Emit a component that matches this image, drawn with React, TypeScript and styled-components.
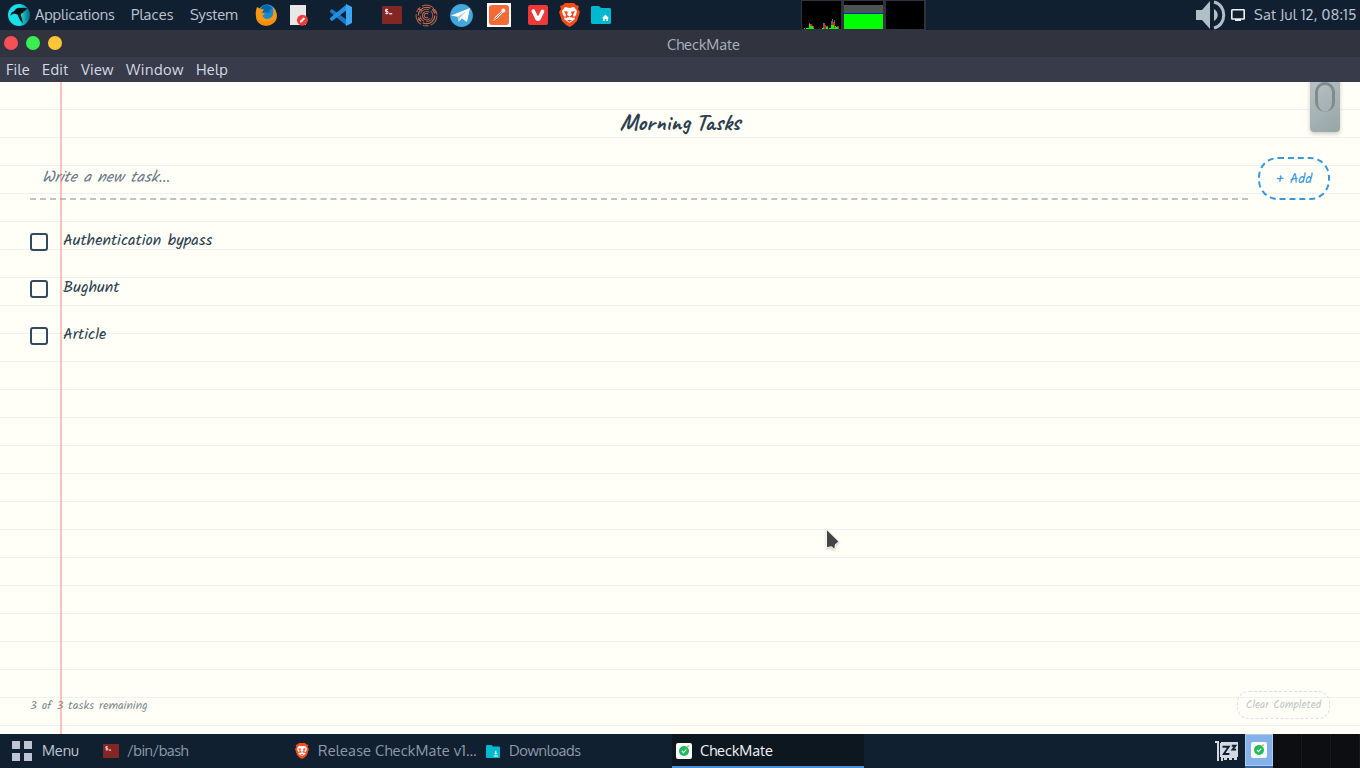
import React from "react";
import styled, { createGlobalStyle } from "styled-components";

const Global = createGlobalStyle`
  *, *::before, *::after { box-sizing: border-box; }
  html, body { margin: 0; padding: 0; overflow: hidden; }
  body { font-family: "Oxygen", "Oxygen-Sans", "Noto Sans", sans-serif; }
  svg { display: block; }
`;

const Desktop = styled.div`
  position: relative;
  width: 1360px;
  height: 768px;
  display: flex;
  flex-direction: column;
  overflow: hidden;
`;

const TopPanel = styled.header`
  height: 30px;
  flex: none;
  display: flex;
  align-items: center;
  background: #112031;
`;

const Slot = styled.span<{ $w: number; $gap?: number }>`
  flex: none;
  display: flex;
  align-items: center;
  width: ${(p) => p.$w}px;
  margin-left: ${(p) => p.$gap ?? 0}px;
`;

const PanelText = styled.span<{ $w: number; $gap?: number; $color?: string; $track?: number }>`
  flex: none;
  width: ${(p) => p.$w}px;
  margin-left: ${(p) => p.$gap ?? 0}px;
  padding-bottom: 2px;
  color: ${(p) => p.$color ?? "#bcc3d2"};
  font-size: 14.6px;
  line-height: 20px;
  letter-spacing: ${(p) => p.$track ?? 0}px;
  white-space: nowrap;
`;

const Spacer = styled.div`
  flex: 1;
`;

const Graphs = styled.div`
  display: flex;
  margin-left: 190px;
`;

const Graph = styled.div`
  width: 42px;
  height: 30px;
  padding: 1px 2px 1px 1px;
  background: #30323f;
  &:last-child {
    width: 41px;
  }
`;

const TitleBar = styled.div`
  height: 27px;
  flex: none;
  display: grid;
  grid-template-columns: 1fr auto 1fr;
  background: #31343f;
`;

const Lights = styled.div`
  display: flex;
  gap: 8px;
  padding: 6px 0 0 4px;
`;

const Light = styled.span<{ $color: string }>`
  width: 14px;
  height: 14px;
  border-radius: 50%;
  background: ${(p) => p.$color};
`;

const WindowTitle = styled.span`
  padding-top: 5px;
  margin-left: 47px;
  width: 73px;
  font-size: 14.6px;
  line-height: 19px;
  color: #a9b0be;
  white-space: nowrap;
`;

const TitleWrap = styled.div`
  display: flex;
  width: 120px;
  justify-content: center;
`;

const MenuBar = styled.nav`
  height: 25px;
  flex: none;
  display: flex;
  align-items: center;
  padding-left: 6px;
  background: #383b4a;
`;

const Paper = styled.main`
  position: relative;
  flex: 1;
  display: flex;
  flex-direction: column;
  padding: 0 30px;
  overflow: hidden;
  background: repeating-linear-gradient(transparent 0 27px, #eef0f1 27px 28px), #fffff8;
  font-family: "Kalam", "Lato", sans-serif;
`;

const MarginLine = styled.div`
  position: absolute;
  top: 0;
  bottom: 0;
  left: 60px;
  width: 2px;
  background: rgba(255, 107, 107, 0.42);
`;

const Clip = styled.div`
  position: absolute;
  top: -8px;
  right: 20px;
  width: 30px;
  height: 58px;
  border-radius: 4px;
  background: linear-gradient(145deg, #bdc3c7, #95a5a6);
  box-shadow: 0 2px 4px rgba(0, 0, 0, 0.2);
  &::after {
    content: "";
    position: absolute;
    top: 8px;
    left: 5px;
    width: 20px;
    height: 30px;
    border: 3px solid #7f8c8d;
    border-bottom: 0;
    border-radius: 10px;
  }
`;

const ListTitle = styled.h1`
  margin: 25px 0 0;
  height: 30px;
  text-align: center;
  font-family: "Caveat", "Kalam", sans-serif;
  font-size: 24px;
  line-height: 30px;
  font-weight: 700;
  color: #2c3e50;
`;

const EntryRow = styled.div`
  display: flex;
  gap: 10px;
  height: 43px;
  margin-top: 20px;
`;

const Entry = styled.div`
  flex: 1;
  height: 43px;
  padding: 9px 12px;
  font-size: 16px;
  font-style: italic;
  line-height: 23px;
  color: #6c7a89;
  border-bottom: 2px dashed #bdc3c7;
`;

const AddButton = styled.button`
  width: 72px;
  height: 43px;
  padding: 0;
  border: 2px dashed #3498db;
  border-radius: 20px;
  background: transparent;
  font: 14px/38px "Kalam", "Lato", sans-serif;
  color: #3498db;
`;

const Tasks = styled.ul`
  list-style: none;
  margin: 18px 0 0;
  padding: 0;
`;

const Task = styled.li`
  display: flex;
  height: 47px;
  padding-top: 11px;
  gap: 15px;
`;

const Check = styled.span`
  width: 18px;
  height: 18px;
  margin-top: 4px;
  border: 2px solid #34495e;
  border-radius: 3px;
`;

const TaskText = styled.span`
  padding-top: 1px;
  font-size: 16px;
  line-height: 22px;
  color: #2c3e50;
  white-space: nowrap;
`;

const Footer = styled.footer`
  display: flex;
  align-items: center;
  justify-content: space-between;
  height: 28px;
  margin-top: auto;
  margin-bottom: 15px;
  color: #7f8c8d;
`;

const Count = styled.span`
  font-size: 12px;
`;

const ClearButton = styled.button`
  width: 93px;
  height: 28px;
  padding: 0;
  border: 1px dashed #dcdfe0;
  border-radius: 12px;
  background: transparent;
  font: 11px/25px "Kalam", "Lato", sans-serif;
  color: #c1c8c8;
  white-space: nowrap;
`;

const Pointer = styled.svg`
  position: absolute;
  left: 824px;
  top: 528px;
`;

const BottomPanel = styled.footer`
  height: 34px;
  flex: none;
  display: flex;
  align-items: center;
  background: #112031;
`;

const ActiveTask = styled.div`
  display: flex;
  align-items: center;
  align-self: stretch;
  width: 192px;
  margin-left: 91px;
  padding-left: 4px;
  padding-top: 1px;
  background: #0d1720;
  border-bottom: 2px solid #4a90d9;
`;

const Workspace = styled.div<{ $current?: boolean }>`
  display: flex;
  align-items: center;
  justify-content: center;
  width: ${(p) => (p.$current ? 28 : 29)}px;
  height: ${(p) => (p.$current ? 32 : 34)}px;
  align-self: flex-start;
  border: ${(p) => (p.$current ? "1px solid #b0ccf5" : "0 solid")};
  border-right: ${(p) => (p.$current ? "1px solid #b0ccf5" : "1px solid #17191c")};
  background: ${(p) => (p.$current ? "#85b1eb" : "#0d0e12")};
`;

const Switcher = styled.div`
  display: flex;
  height: 34px;
  width: 115px;
  margin-left: 7px;
  background: linear-gradient(90deg, #39679d 28px, #0d0e12 28px);
`;

const Parrot = () => (
  <svg width="22" height="22" viewBox="0 0 22 22">
    <defs>
      <linearGradient id="shade" x1="0" x2="1">
        <stop offset=".55" stopColor="#18e0ea" />
        <stop offset="1" stopColor="#0b6674" />
      </linearGradient>
    </defs>
    <circle cx="11" cy="11" r="11" fill="url(#shade)" />
    <path d="M2.2 11.4 3.6 8.6 6.4 7 8 4.8l2.6-1 6.4.2 3 .8-3 1.2 1 .5-3 1.2.6.8-2.2.8-.6 1.6 2.4 8.6-3.2-3.6-2.6-5.3L6 9.6z" fill="#071014" />
  </svg>
);

const Firefox = () => (
  <svg width="23" height="22" viewBox="0 0 23 22">
    <circle cx="12" cy="9.5" r="9.3" fill="#168acb" />
    <path d="M8 2c4-2 8 0 9 3l-3 1 1 3-5-1-3 1-2-3z" fill="#0b66a8" />
    <path d="M2 3c1 1 3 1 4 2l3 .5-2 3 3 1.5-2.5 1.5C8.500 15.500 14.500 16.500 17.500 12l1-5-1-4c4 3 6 9 3 14-5 7-16 6-19-2C0 9 1 6 2 3z" fill="#fa9815" />
    <path d="M1 12c3 6 13 8 20 2-3 7-12 10-17 5-2-2-3-4-3-7z" fill="#f18d0b" />
  </svg>
);

const DocIcon = () => (
  <svg width="19" height="22" viewBox="0 0 19 22">
    <path d="M0 1h16v20H0z" fill="#e8e8e9" />
    <circle cx="12.4" cy="16.2" r="5.5" fill="#f23c3a" />
    <path d="m9.800 18.800.5-2 3.500-3.500 1.400 1.400-3.500 3.500z" fill="#fff" />
  </svg>
);

const Code = () => (
  <svg width="22" height="22" viewBox="0 0 22 22">
    <path d="m0 6.500 2-1.500L17 16v6L0 8z" fill="#1976c8" />
    <path d="m0 15.500 2 1.500L17 6V0L0 14z" fill="#238fdf" />
    <path d="m16 0 6 3v16l-6 3z" fill="#3ba8f4" />
  </svg>
);

const Terminal = ({ w, h }: { w: number; h: number }) => (
  <svg width={w} height={h} viewBox="0 0 20 18" preserveAspectRatio="none">
    <rect width="20" height="18" rx="1" fill="#832724" />
    <path d="M6 3.500H3.500v2H6v2H3.300M4.700 2.700v5.600" fill="none" stroke="#f5dddd" strokeWidth="1" />
    <path d="M7.200 7.800h3" stroke="#fff" strokeWidth="1.200" />
  </svg>
);

const Burp = () => (
  <svg width="23" height="23" viewBox="0 0 23 23" fill="none" strokeWidth="1.100">
    <circle cx="11.500" cy="11.500" r="10.400" stroke="#b0573f" strokeDasharray="12 2 6 2" />
    <circle cx="11.500" cy="11.500" r="8.300" stroke="#c47a5a" strokeDasharray="17 2 5 2" />
    <circle cx="11.500" cy="11.500" r="6.200" stroke="#b9503f" strokeDasharray="10 2 7 2" />
    <path d="M14.300 8.400A4.200 4.200 0 1 0 14.600 14.600M13 10a2.200 2.200 0 1 0 0 3M3 4.500l4 2M18 4l3 5M3 16l3-2" stroke="#c56a4f" />
  </svg>
);

const Telegram = () => (
  <svg width="23" height="23" viewBox="0 0 23 23">
    <circle cx="11.5" cy="11.5" r="11.4" fill="#42a7dc" />
    <path d="M1 11.5 20 4l-3 14-5.2-3.5-3 3.2-1.2-5z" fill="#fff" />
    <path d="m7.6 12.7 9-6-6.5 7-1.3 4z" fill="#b9cbd7" />
  </svg>
);

const Postman = () => (
  <svg width="24" height="24" viewBox="0 0 24 24">
    <path d="M0 0h24v24H0z" fill="#fff" />
    <rect x="2" y="2" width="20" height="20" rx="3" fill="#f36a35" />
    <path d="m6 18 2.500-4.500 6-5.500 1.600 1.600-5.600 5.600z" fill="#fff" />
    <circle cx="16.400" cy="7.400" r="2" fill="#fff" />
    <path d="m7.200 16.700 8-8" stroke="#9c5540" strokeWidth=".8" />
  </svg>
);

const Vivaldi = () => (
  <svg width="20" height="20" viewBox="0 0 20 20">
    <rect width="20" height="20" rx="2" fill="#ef3939" />
    <path d="M5.300 6 9 13.600q1 1.200 2 0L14.500 6.400" fill="none" stroke="#fff" strokeWidth="3.600" strokeLinecap="round" strokeLinejoin="round" />
  </svg>
);

const Brave = ({ w, h }: { w: number; h: number }) => (
  <svg width={w} height={h} viewBox="0 0 21 24">
    <path d="m6 0-2 2-3 1 1 3-2 3 3 9 4 4 3.5 2 3.5-2 4-4 3-9-2-3 1-3-3-1-2-2z" fill="#fb4b17" />
    <path d="m6 4 4.5 1L15 4l3 4-1 4-2 2 1 2-5.5 4L5 16l1-2-2-2-1-4z" fill="#fff" />
    <path d="m5 8 4 .8-1 3 2.5 2 2.5-2-1-3 4-.8-2 4 1 3-4.5-1-4.5 1 1-3zM8 17h5l-2.5 2z" fill="#ed4820" />
  </svg>
);

const Folder = ({ w, h, down }: { w: number; h: number; down?: boolean }) => (
  <svg width={w} height={h} viewBox="0 0 20 18" preserveAspectRatio="none">
    <path d="M1 0h7l2 2h9l1 1v14l-1 1H1l-1-1V1z" fill="#00b9d0" />
    {down ? (
      <path d="M13.300 8h1.400v3h1.700L14 13.400 11.600 11h1.700zM11 14.500h6V16h-6z" fill="#fff" />
    ) : (
      <path d="m14.400 8.500 3.600 3.700h-1V15h-1.700v-2h-1.600v2H12v-2.800h-1z" fill="#fff" />
    )}
  </svg>
);

const Volume = () => (
  <svg width="30" height="30" viewBox="0 0 30 30">
    <path d="M0 10h6l8-9v28l-8-9H0z" fill="#b1bec5" />
    <path d="M18 9c5 3 5 9 0 12z" fill="#b1bec5" />
    <path d="M18 2c13 3 13 23 0 26" fill="none" stroke="#b1bec5" strokeWidth="3" />
  </svg>
);

const Monitor = () => (
  <svg width="14" height="12" viewBox="0 0 14 12">
    <rect x=".8" y=".8" width="12.4" height="9.2" rx=".6" fill="none" stroke="#eef1f3" strokeWidth="1.6" />
    <path d="M4 10h6v2H4z" fill="#eef1f3" />
  </svg>
);

const CpuGraph = () => (
  <svg width="39" height="28" viewBox="0 0 39 28">
    <path d="M0 0h39v28H0z" />
    <path d="M21 28v-6h2v6zm3 0v-3h2v3zm5 0v-8h1v-2h1v3h1v-2h1v9zm6 0v-3h2v3z" fill="#666" />
    <path d="M7 27v-5h1v1h2v2h2v3zM22 28v-4h2v4zm7 0v-5h1v-1h3v5h3v-2h1v3z" fill="#e0221c" />
    <path d="M2 28v-1h1v1zm2 0v-1h3v-4h1v2h3v2h1v1zm16 0v-1h2v1zm4 0v-2h2v2zm3 0v-1h2v-3h3v3h1v-2h1v3zm7 0v-2h2v2z" fill="#0f0" />
  </svg>
);

const MemGraph = () => (
  <svg width="39" height="28" viewBox="0 0 39 28">
    <path d="M0 0h39v28H0z" />
    <path d="M0 4h39v8H0z" fill="#4b544d" />
    <path d="M0 12h39v1H0z" fill="#0628c8" />
    <path d="M0 13h39v15H0z" fill="#0f0" />
  </svg>
);

const NetGraph = () => (
  <svg width="38" height="28" viewBox="0 0 38 28">
    <path d="M0 0h38v28H0z" />
  </svg>
);

const CheckApp = () => (
  <svg width="16" height="16" viewBox="0 0 16 16">
    <rect width="16" height="16" rx="2" fill="#f7fafa" />
    <circle cx="8" cy="8" r="5" fill="#20bc5b" />
    <path d="m5.900 8 1.600 1.600 2.700-2.900" fill="none" stroke="#fff" strokeWidth="1.100" />
    <path d="m11.200 4 1.600-1.400" stroke="#f5a449" strokeWidth="1.400" />
  </svg>
);

const Grid = () => (
  <svg width="20" height="20" viewBox="0 0 20 20">
    <path d="M0 0h8v8H0zM12 0h8v8h-8zM0 12h8v8H0zM12 12h8v8h-8z" fill="#bec4d3" />
  </svg>
);

const Sleeper = () => (
  <svg width="23" height="20" viewBox="0 0 23 20">
    <path d="M0 0h4v20H2V2H0zM6 1h17v15h-1v3h-3v-2h-2v2h-3v-2h-2v2H9v-2H8v3H6z" fill="#d3d8e2" />
    <path d="M5 2h2v14H5z" fill="#d3d8e2" />
    <path d="M7.500 5.800h6.200L8.800 13h5.600M16.800 4.800h3.600L17.500 8.600h3.600" fill="none" stroke="#112031" strokeWidth="1.900" />
  </svg>
);

export default function App() {
  return (
    <Desktop>
      <Global />
      <TopPanel>
        <Slot $w={22} $gap={8}><Parrot /></Slot>
        <PanelText $w={80} $gap={5} $track={-0.13}>Applications</PanelText>
        <PanelText $w={43} $gap={16} $track={0.15}>Places</PanelText>
        <PanelText $w={48} $gap={16} $track={-0.15}>System</PanelText>
        <Slot $w={23} $gap={17}><Firefox /></Slot>
        <Slot $w={19} $gap={12}><DocIcon /></Slot>
        <Slot $w={22} $gap={21}><Code /></Slot>
        <Slot $w={20} $gap={30}><Terminal w={20} h={18} /></Slot>
        <Slot $w={23} $gap={13}><Burp /></Slot>
        <Slot $w={23} $gap={12}><Telegram /></Slot>
        <Slot $w={24} $gap={14}><Postman /></Slot>
        <Slot $w={20} $gap={17}><Vivaldi /></Slot>
        <Slot $w={21} $gap={11}><Brave w={21} h={24} /></Slot>
        <Slot $w={20} $gap={11}><Folder w={20} h={18} /></Slot>
        <Graphs>
          <Graph><CpuGraph /></Graph>
          <Graph><MemGraph /></Graph>
          <Graph><NetGraph /></Graph>
        </Graphs>
        <Spacer />
        <Slot $w={30}><Volume /></Slot>
        <Slot $w={14} $gap={5}><Monitor /></Slot>
        <PanelText $w={106} $gap={9} $track={0.27}>Sat Jul 12, 08:15</PanelText>
      </TopPanel>

      <TitleBar>
        <Lights>
          <Light $color="#f55057" />
          <Light $color="#3aed50" />
          <Light $color="#fdc637" />
        </Lights>
        <TitleWrap><WindowTitle>CheckMate</WindowTitle></TitleWrap>
      </TitleBar>
      <MenuBar>
        <PanelText $w={24} $color="#d3dae3" $track={0.2}>File</PanelText>
        <PanelText $w={27} $gap={12} $color="#d3dae3" $track={0.3}>Edit</PanelText>
        <PanelText $w={33} $gap={12} $color="#d3dae3" $track={0.2}>View</PanelText>
        <PanelText $w={58} $gap={12} $color="#d3dae3" $track={0.5}>Window</PanelText>
        <PanelText $w={32} $gap={12} $color="#d3dae3" $track={0.2}>Help</PanelText>
      </MenuBar>

      <Paper>
        <ListTitle>Morning Tasks</ListTitle>
        <EntryRow>
          <Entry>Write a new task...</Entry>
          <AddButton>+ Add</AddButton>
        </EntryRow>
        <Tasks>
          <Task><Check /><TaskText>Authentication bypass</TaskText></Task>
          <Task><Check /><TaskText>Bughunt</TaskText></Task>
          <Task><Check /><TaskText>Article</TaskText></Task>
        </Tasks>
        <Footer>
          <Count>3 of 3 tasks remaining</Count>
          <ClearButton>Clear Completed</ClearButton>
        </Footer>
        <MarginLine />
        <Clip />
      </Paper>

      <BottomPanel>
        <Slot $w={20} $gap={12}><Grid /></Slot>
        <PanelText $w={37} $gap={10} $track={-0.1}>Menu</PanelText>
        <Slot $w={16} $gap={24}><Terminal w={16} h={14} /></Slot>
        <PanelText $w={62} $gap={8} $color="#8d98a9" $track={-0.5}>/bin/bash</PanelText>
        <Slot $w={14} $gap={106}><Brave w={14} h={16} /></Slot>
        <PanelText $w={160} $gap={9} $color="#8d98a9" $track={0.2}>Release CheckMate v1…</PanelText>
        <Slot $w={14} $gap={8}><Folder w={14} h={13} down /></Slot>
        <PanelText $w={72} $gap={9} $color="#8d98a9" $track={-0.35}>Downloads</PanelText>
        <ActiveTask>
          <Slot $w={16}><CheckApp /></Slot>
          <PanelText $w={73} $gap={8} $color="#eef1f5">CheckMate</PanelText>
        </ActiveTask>
        <Spacer />
        <Slot $w={23}><Sleeper /></Slot>
        <Switcher>
          <Workspace $current><CheckApp /></Workspace>
          <Workspace />
          <Workspace />
          <Workspace />
        </Switcher>
      </BottomPanel>

      <Pointer width="18" height="24" viewBox="0 0 18 24">
        <path d="M3 2.2v17l4-1 1 .2 2.2 2.6.8-4.5 3.4-3.1z" fill="#444" stroke="#fff" strokeWidth="1.6" paintOrder="stroke" filter="drop-shadow(0 1px 1px rgba(0,0,0,.25))" />
      </Pointer>
    </Desktop>
  );
}
